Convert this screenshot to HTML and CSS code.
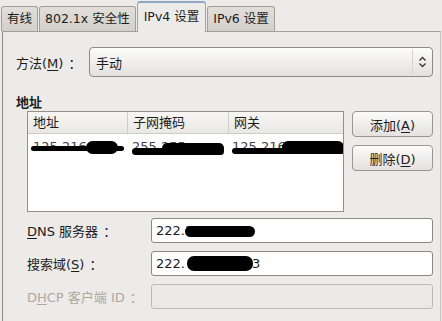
FILE: index.html
```html
<!DOCTYPE html>
<html>
<head>
<meta charset="utf-8">
<title>IPv4 设置</title>
<link rel="stylesheet" href="styles.css">
</head>
<body>

<div class="dialog">
  <!-- Tab strip -->
  <div class="tabs">
    <div class="tab">有线</div>
    <div class="tab">802.1x 安全性</div>
    <div class="tab active">IPv4 设置</div>
    <div class="tab">IPv6 设置</div>
  </div>

  <!-- IPv4 page -->
  <div class="pane">
    <div class="method-row">
      <span class="label">方法(<u>M</u>)<span class="colon">：</span></span>
      <div class="combo">
        <span class="combo-text">手动</span>
        <span class="combo-arrow">
          <svg width="9" height="12" viewBox="0 0 9 12">
            <path d="M1.5 4.5 L4.5 1.5 L7.5 4.5 M1.5 7.5 L4.5 10.5 L7.5 7.5" fill="none" stroke="#333" stroke-width="1.3"/>
          </svg>
        </span>
      </div>
    </div>

    <div class="section-title">地址</div>

    <div class="address-block">
      <div class="tree">
        <div class="tree-head">
          <div class="col c1">地址</div>
          <div class="col c2">子网掩码</div>
          <div class="col c3">网关</div>
        </div>
        <div class="tree-row">
          <div class="col c1"><span class="blur-text">125.216.</span><span class="ink ink1"></span></div>
          <div class="col c2"><span class="blur-text">255.255</span><span class="ink ink2"></span></div>
          <div class="col c3"><span class="blur-text">125.216</span><span class="ink ink3"></span></div>
        </div>
      </div>
      <div class="side-buttons">
        <button class="btn">添加(<u>A</u>)</button>
        <button class="btn">删除(<u>D</u>)</button>
      </div>
    </div>

    <div class="form">
      <div class="form-row">
        <span class="label"><u>D</u>NS 服务器<span class="colon">：</span></span>
        <div class="entry"><span>222.2</span><span class="ink ink4"></span></div>
      </div>
      <div class="form-row">
        <span class="label">搜索域(<u>S</u>)<span class="colon">：</span></span>
        <div class="entry"><span>222.</span><span class="ink ink5"></span><span class="tail">3</span></div>
      </div>
      <div class="form-row disabled">
        <span class="label">D<u>H</u>CP 客户端 ID<span class="colon">：</span></span>
        <div class="entry"></div>
      </div>
    </div>
  </div>
</div>

</body>
</html>
```

FILE: styles.css
```css
/* Page base */
body {
  margin: 0;
  width: 442px;
  height: 321px;
  overflow: hidden;
  background: #edebe9;
  font-family: 'DejaVu Sans', 'Noto Sans CJK SC', sans-serif;
  font-size: 13px;
  color: #1c1c1c;
}

u { text-decoration: underline; text-underline-offset: 2px; }

.colon { font-family: 'Noto Sans CJK SC', sans-serif; padding-left: 5px; }

.dialog {
  height: 321px;
  display: flex;
  flex-direction: column;
}

/* Tabs */
.tabs {
  display: flex;
  align-items: flex-end;
  height: 31px;
  padding-left: 1px;
}

.tab {
  height: 24px;
  line-height: 24px;
  padding: 0 5px;
  margin-right: 1px;
  font-size: 12.5px;
  background: linear-gradient(#e2dfdb, #d3cfca);
  border: 1px solid #a29e99;
  border-bottom: none;
  border-radius: 3px 3px 0 0;
  white-space: nowrap;
}

.tab.active {
  height: 29px;
  line-height: 27px;
  background: #edebe9;
  border-color: #97a6b8;
  border-top: 2px solid #8fa6c4;
  position: relative;
  top: 1px;
  padding: 0 6px;
}

/* Page frame */
.pane {
  flex: 1;
  margin-left: 2px;
  margin-right: 1px;
  border-top: 1px solid #a29e99;
  border-left: 1px solid #8c8883;
  border-right: 1px solid #c9c5c0;
  padding: 14px 7px 0 13px;
}

/* Method row */
.method-row {
  display: flex;
  align-items: center;
  height: 32px;
}

.method-row .label { width: 73px; }

.combo {
  flex: 1;
  height: 30px;
  display: flex;
  align-items: center;
  border: 1px solid #8e8a86;
  border-radius: 4px;
  background: linear-gradient(#fcfcfb, #e3e1de);
  box-sizing: border-box;
}

.combo-text { flex: 1; padding-left: 6px; }

.combo-arrow {
  width: 19px;
  height: 24px;
  border-left: 1px solid #d6d3cf;
  display: flex;
  align-items: center;
  justify-content: center;
}

/* Address section */
.section-title {
  font-weight: bold;
  margin-top: 14px;
  height: 19px;
}

.address-block {
  display: flex;
  padding-left: 11px;
}

.tree {
  width: 315px;
  height: 99px;
  background: #fff;
  border: 1px solid #938f8a;
}

.tree-head {
  display: flex;
  height: 21px;
  line-height: 21px;
  background: linear-gradient(#f7f6f5, #eae8e5);
  border-bottom: 1px solid #cfcbc6;
}

.tree-head .col + .col { border-left: 1px solid #d0ccc7; }

.tree-row {
  display: flex;
  height: 22px;
  line-height: 22px;
  margin-top: 2px;
}

.col {
  padding-left: 5px;
  white-space: nowrap;
  overflow: hidden;
  position: relative;
}

.c1 { width: 94px; }
.c2 { width: 95px; }
.c3 { flex: 1; }

.blur-text { color: #444; }

/* Redaction marks over the addresses */
.ink {
  position: absolute;
  background: #000;
  border-radius: 7px;
}

.ink1 { left: 3px; width: 93px; height: 5px; top: 10px; }
.ink1::after { content: ''; position: absolute; left: 55px; top: -5px; width: 32px; height: 13px; background: #000; border-radius: 7px; }
.ink2 { left: 5px; width: 92px; height: 7px; top: 12px; }
.ink2::after { content: ''; position: absolute; left: 30px; top: -5px; width: 62px; height: 11px; background: #000; border-radius: 5px; }
.ink3 { left: 5px; width: 112px; height: 6px; top: 12px; }
.ink3::after { content: ''; position: absolute; left: 50px; top: -7px; width: 62px; height: 12px; background: #000; border-radius: 6px; }

.side-buttons {
  display: flex;
  flex-direction: column;
  gap: 8px;
  margin-left: 8px;
}

.btn {
  width: 81px;
  height: 26px;
  font: inherit;
  color: #1c1c1c;
  background: linear-gradient(#fbfbfa, #e4e1de);
  border: 1px solid #9a9691;
  border-radius: 4px;
  padding: 0;
}

/* Lower form */
.form {
  margin-top: 6px;
  padding-left: 11px;
  display: flex;
  flex-direction: column;
  gap: 8px;
}

.form-row {
  display: flex;
  align-items: center;
}

.form-row .label { width: 124px; white-space: nowrap; }

.entry {
  flex: 1;
  height: 25px;
  line-height: 23px;
  box-sizing: border-box;
  background: #fff;
  border: 1px solid #8b8783;
  border-radius: 3px;
  padding-left: 4px;
  position: relative;
  white-space: nowrap;
}

.ink4 { left: 33px; width: 70px; height: 11px; top: 7px; }
.ink5 { left: 35px; width: 66px; height: 15px; top: 4px; }
.tail { position: absolute; left: 100px; }

.disabled .label { color: #aca8a3; }
.disabled .entry { background: #ebe9e6; border-color: #bdb9b4; }
```
